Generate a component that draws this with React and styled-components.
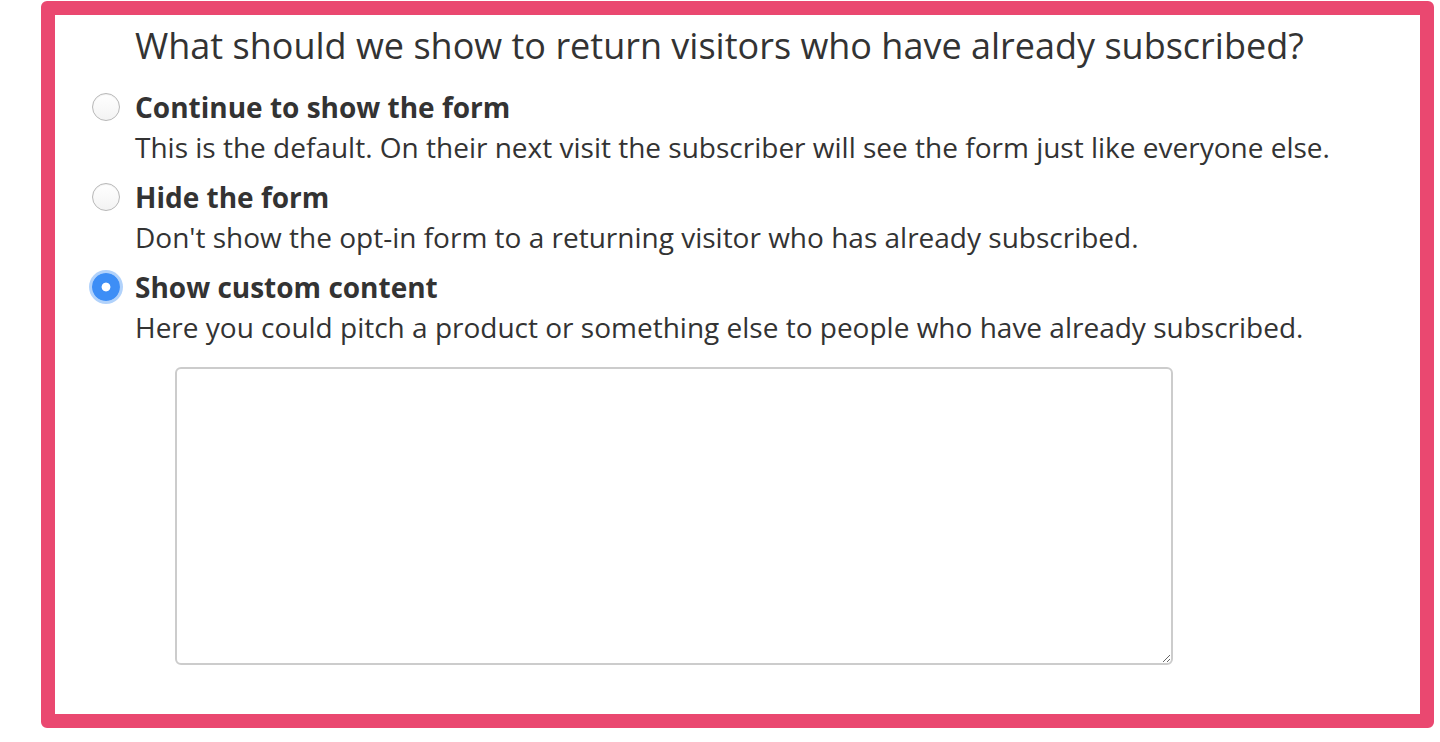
import React, { useState } from "react";
import styled, { createGlobalStyle } from "styled-components";

const GlobalStyle = createGlobalStyle`
  html, body {
    margin: 0;
    padding: 0;
    background: #ffffff;
    font-family: "Open Sans", "Noto Sans", sans-serif;
    color: #333333;
  }
`;

const Page = styled.div`
  padding: 1px 6px 0 41px;
`;

const Frame = styled.section`
  box-sizing: border-box;
  width: 1393px;
  height: 727px;
  border: 14px solid #ea4870;
  border-radius: 6px;
  padding: 11px 0 0 37px;
`;

const Heading = styled.h2`
  margin: 0 0 21px 43px;
  font-size: 36px;
  font-weight: 400;
  line-height: 40px;
  color: #333333;
`;

const OptionList = styled.div`
  display: flex;
  flex-direction: column;
  gap: 10px;
`;

const Option = styled.label`
  display: flex;
  align-items: flex-start;
  gap: 15px;
  cursor: pointer;
`;

const Radio = styled.input`
  appearance: none;
  box-sizing: border-box;
  flex: none;
  width: 28px;
  height: 28px;
  margin: 6px 0 0;
  border-radius: 50%;
  border: 1.5px solid #b8b8b8;
  background: linear-gradient(#ffffff, #f3f3f3);
  box-shadow: inset 0 1px 1px rgba(0, 0, 0, 0.06);
  outline: none;

  &:checked {
    border: none;
    background: radial-gradient(circle, #ffffff 0 4px, #3d8ef6 4.8px);
    box-shadow: 0 0 0 3px rgba(61, 142, 246, 0.4);
  }
`;

const Body = styled.div`
  display: flex;
  flex-direction: column;
`;

const Title = styled.div`
  font-size: 28px;
  font-weight: 700;
  line-height: 40px;
`;

const Desc = styled.div`
  font-size: 28px;
  line-height: 40px;
`;

const Content = styled.textarea`
  box-sizing: border-box;
  width: 998px;
  height: 298px;
  margin: 20px 0 0 40px;
  border: 2px solid #cccccc;
  border-radius: 6px;
  font-family: inherit;
  font-size: 26px;
  padding: 8px 12px;
  outline: none;
`;

const options = [
  {
    id: "show",
    title: "Continue to show the form",
    desc: "This is the default. On their next visit the subscriber will see the form just like everyone else.",
  },
  {
    id: "hide",
    title: "Hide the form",
    desc: "Don't show the opt-in form to a returning visitor who has already subscribed.",
  },
  {
    id: "custom",
    title: "Show custom content",
    desc: "Here you could pitch a product or something else to people who have already subscribed.",
  },
];

const App = () => {
  const [choice, setChoice] = useState("custom");
  return (
    <Page>
      <GlobalStyle />
      <Frame>
        <Heading>What should we show to return visitors who have already subscribed?</Heading>
        <OptionList>
          {options.map((opt) => (
            <Option key={opt.id}>
              <Radio
                type="radio"
                name="returning"
                value={opt.id}
                checked={choice === opt.id}
                onChange={() => setChoice(opt.id)}
              />
              <Body>
                <Title>{opt.title}</Title>
                <Desc>{opt.desc}</Desc>
                {opt.id === "custom" && choice === "custom" && <Content />}
              </Body>
            </Option>
          ))}
        </OptionList>
      </Frame>
    </Page>
  );
};

export default App;
